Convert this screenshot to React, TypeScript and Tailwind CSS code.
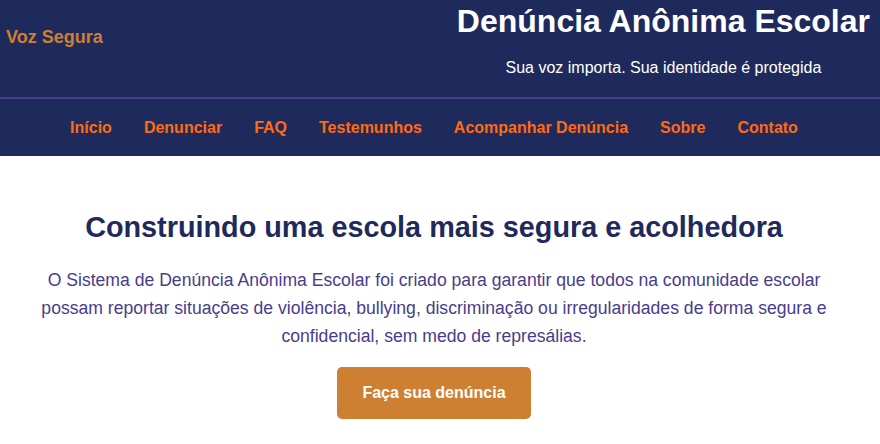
const links = ["Início", "Denunciar", "FAQ", "Testemunhos", "Acompanhar Denúncia", "Sobre", "Contato"];

export default function App() {
  return (
    <div className="min-h-screen bg-white font-['Liberation_Sans',Arial,sans-serif]">
      <header className="bg-[#1f2a5c]">
        <div className="flex items-start justify-between pl-[6px] pr-[10px] border-b-2 border-[#483d8b]">
          <div className="mt-[27px] text-[18px] font-bold leading-[21px] text-[#cd7f32]">Voz Segura</div>
          <div className="pt-[3px] pb-[20px] text-center text-white">
            <h1 className="text-[32px] font-bold leading-[37px]">Denúncia Anônima Escolar</h1>
            <p className="mt-[19px] text-[16px] leading-[18px]">Sua voz importa. Sua identidade é protegida</p>
          </div>
        </div>
        <nav className="flex justify-center gap-8 pr-[12px] pt-[20px] pb-[19px]">
          {links.map((l) => (
            <a key={l} href="#" className="text-[16px] font-bold leading-[18px] text-[#ff6a13]">
              {l}
            </a>
          ))}
        </nav>
      </header>

      <main className="pr-[12px]">
        <section className="mx-auto max-w-[800px] pt-[55px] text-center">
          <h2 className="text-[28.8px] font-bold leading-[33px] text-[#1f2a5c]">
            Construindo uma escola mais segura e acolhedora
          </h2>
          <p className="mt-[22px] text-[17.6px] leading-[1.6] text-[#483d8b]">
            O Sistema de Denúncia Anônima Escolar foi criado para garantir que todos na comunidade escolar possam
            reportar situações de violência, bullying, discriminação ou irregularidades de forma segura e confidencial,
            sem medo de represálias.
          </p>
          <button className="mt-[17px] rounded-[5px] bg-[#cd7f32] px-[25px] pt-4 pb-[17px] text-[16px] font-bold leading-[19px] text-white">
            Faça sua denúncia
          </button>
        </section>
      </main>
    </div>
  );
}
